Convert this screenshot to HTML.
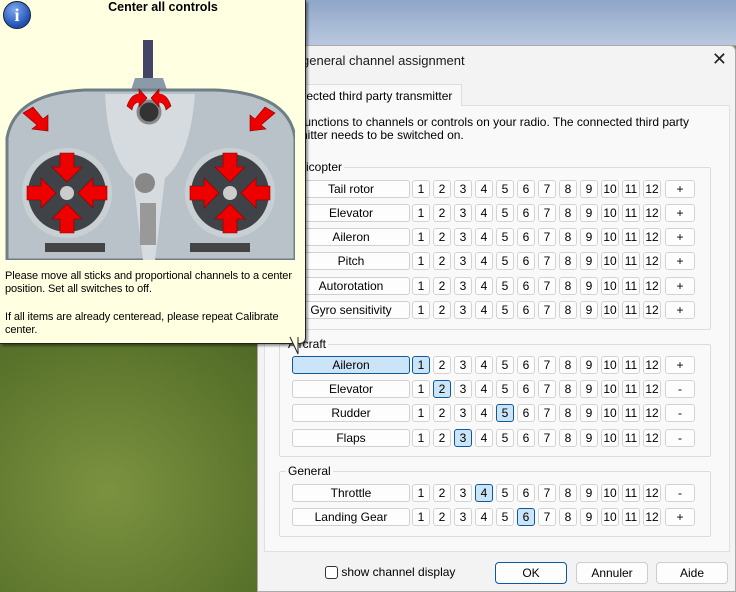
<!DOCTYPE html>
<html><head><meta charset="utf-8"><style>
*{box-sizing:border-box;margin:0;padding:0}
body{width:736px;height:592px;overflow:hidden;position:relative;font-family:"Liberation Sans",sans-serif;font-size:12px;color:#000;
background:linear-gradient(180deg,#8fa6c8 0,#b9c8de 45px,#7d8a4a 46px,#6a7f36 300px,#5d7a2c 592px)}
.grass{position:absolute;left:0;top:340px;width:270px;height:252px;background:radial-gradient(ellipse at 40% 60%,#7b9340,#5b742c 70%,#4e6626)}
.dlg{position:absolute;left:257px;top:45px;width:479px;height:547px;background:#f3f3f3;border:1px solid #aaa;border-radius:6px 6px 0 0}
.title{position:absolute;left:44px;top:7px;font-size:13px;color:#1a1a1a}
.x{position:absolute;right:8px;top:3px;font-size:18px;color:#222}
.tab{position:absolute;left:14px;top:38px;width:190px;height:22px;background:#f9f9f9;border:1px solid #ddd;border-bottom:none;padding:4px 0 0 20px;font-size:12px}
.panel{position:absolute;left:6px;top:59px;width:466px;height:447px;background:#f9f9f9;border:1px solid #e0e0e0}
.desc{position:absolute;left:43px;top:70px;font-size:12px;line-height:13px;width:420px}
.grp{position:absolute;left:21px;width:432px;border:1px solid #dcdcdc;border-radius:2px}
.grp span{position:absolute;left:6px;top:-8px;background:#f9f9f9;padding:0 2px;font-size:12px}
.row{position:absolute;left:34px;height:18px}
.nm{position:absolute;left:0;width:118px;height:18px;background:#fdfdfd;border:1px solid #d0d0d0;border-radius:3px;text-align:center;line-height:16px}
.c{position:absolute;top:0;width:18px;height:18px;background:#fdfdfd;border:1px solid #d3d3d3;border-radius:3px;text-align:center;line-height:16px}
.s{background:#cce4f7;border:1px solid #0b5aa0}
.pm{position:absolute;left:373px;width:30px;height:18px;background:#fdfdfd;border:1px solid #d3d3d3;border-radius:3px;text-align:center;line-height:16px}
.btn{position:absolute;top:516px;height:22px;background:#fdfdfd;border:1px solid #ccc;border-radius:4px;text-align:center;line-height:20px}
.tip{position:absolute;left:0;top:0;width:306px;height:344px;background:#ffffe1;border:1px solid #222;border-top:none;border-left:none;border-radius:0 0 6px 0;box-shadow:2px 2px 2px rgba(0,0,0,.4)}
.tip h1{position:absolute;left:0;width:326px;text-align:center;top:0;font-size:12.5px;font-weight:bold}
.tip p{position:absolute;left:5px;width:300px;font-size:11px;line-height:13px;letter-spacing:-0.1px}
</style></head><body>
<div class="grass"></div>
<div class="dlg">
<div class="title">general channel assignment</div><div class="x">✕</div>
<div class="panel"></div>
<div class="tab">nnected third party transmitter</div>
<div class="desc">functions to channels or controls on your radio. The connected third party<br>nitter needs to be switched on.</div>
<div class="grp" style="top:121px;height:163px"><span>Helicopter</span></div>
<div class="grp" style="top:298px;height:113px"><span>Aircraft</span></div>
<div class="grp" style="top:425px;height:66px"><span>General</span></div>
<div id="rows"></div>
<div class="btn" style="left:67px;border:none;background:none;text-align:left"><span style="display:inline-block;width:13px;height:13px;border:1px solid #333;border-radius:3px;vertical-align:-3px;background:#fff"></span> show channel display</div>
<div class="btn" style="left:237px;width:72px;border-color:#0b5aa0">OK</div>
<div class="btn" style="left:318px;width:72px">Annuler</div>
<div class="btn" style="left:398px;width:72px">Aide</div>
</div>
<div class="tip">
<div style="position:absolute;left:3px;top:1px;width:28px;height:28px;border-radius:50%;background:radial-gradient(circle at 40% 30%,#7fa8ee,#1f4fb5 70%);border:1px solid #123;color:#fff;font:bold 18px 'Liberation Serif',serif;text-align:center;line-height:27px">i</div>
<h1>Center all controls</h1>
<svg style="position:absolute;left:5px;top:38px" width="290" height="222" viewBox="0 0 290 222">
<rect x="138" y="2" width="10" height="40" fill="#446"/>
<path d="M120 70 L130 40 L158 40 L168 70Z" fill="#8a9aa8"/>
<path d="M2 222 L2 100 Q10 55 80 52 L210 52 Q284 55 290 100 L290 222Z" fill="#b8c2c8" stroke="#6f7f86" stroke-width="3"/>
<path d="M100 56 L190 56 Q185 120 160 140 L150 222 L138 222 L128 140 Q103 120 100 56Z" fill="#d5dbdf"/>
<circle cx="144" cy="74" r="11" fill="#333" stroke="#888" stroke-width="3"/>
<circle cx="62" cy="155" r="42" fill="#3f4347" stroke="#c9d0d4" stroke-width="6"/>
<circle cx="225" cy="155" r="42" fill="#3f4347" stroke="#c9d0d4" stroke-width="6"/>
<circle cx="62" cy="155" r="7" fill="#ccc"/><circle cx="225" cy="155" r="7" fill="#ccc"/>
<circle cx="140" cy="145" r="10" fill="#888"/>
<rect x="135" y="165" width="16" height="42" fill="#999"/>
<rect x="40" y="205" width="60" height="9" fill="#444"/><rect x="185" y="205" width="60" height="9" fill="#444"/>
<g fill="#e00" stroke="#800" stroke-width=".6">
<path d="M55 115h14v14h8l-15 15-15-15h8z"/><path d="M55 195h14v-14h8l-15-15-15 15h8z"/>
<path d="M22 148v14h14v8l15-15-15-15v8z"/><path d="M102 148v14h-14v8l-15-15 15-15v8z"/>
<path d="M218 115h14v14h8l-15 15-15-15h8z"/><path d="M218 195h14v-14h8l-15-15-15 15h8z"/>
<path d="M185 148v14h14v8l15-15-15-15v8z"/><path d="M265 148v14h-14v8l-15-15 15-15v8z"/>
<path d="M18 75l10-6 10 12 5-4 0 16-16-2 5-4z"/><path d="M270 75l-10-6-10 12-5-4 0 16 16-2-5-4z"/>
<path d="M122 68q4-12 12-12l0-5 8 9-8 9 0-5q-6 1-7 8z"/><path d="M166 68q-4-12-12-12l0-5-8 9 8 9 0-5q6 1 7 8z"/>
</g></svg>
<p style="top:270px">Please move all sticks and proportional channels to a center position. Set all switches to off.</p>
<p style="top:311px">If all items are already centeread, please repeat Calibrate center.</p>
</div>
<svg style="position:absolute;left:285px;top:336px" width="20" height="22"><path d="M5 1 L13 18 L13 1" fill="#ffffe1" stroke="#222"/></svg>
<script>
var rows=[["Tail rotor",0,"+",134],["Elevator",0,"+",158],["Aileron",0,"+",182],["Pitch",0,"+",206],["Autorotation",0,"+",231],["Gyro sensitivity",0,"+",255],
["Aileron",1,"+",310],["Elevator",2,"-",334],["Rudder",5,"-",358],["Flaps",3,"-",383],["Throttle",4,"-",438],["Landing Gear",6,"+",462]];
var h="";rows.forEach(function(r,i){h+='<div class="row" style="top:'+r[3]+'px"><div class="nm"'+(i==6?' style="background:#cce4f7;border-color:#0b5aa0"':'')+'>'+r[0]+'</div>';
for(var k=1;k<=12;k++)h+='<div class="c'+(k==r[1]?' s':'')+'" style="left:'+(120+(k-1)*21)+'px">'+k+'</div>';
h+='<div class="pm">'+r[2]+'</div></div>';});
document.getElementById("rows").innerHTML=h;
</script>
</body></html>
